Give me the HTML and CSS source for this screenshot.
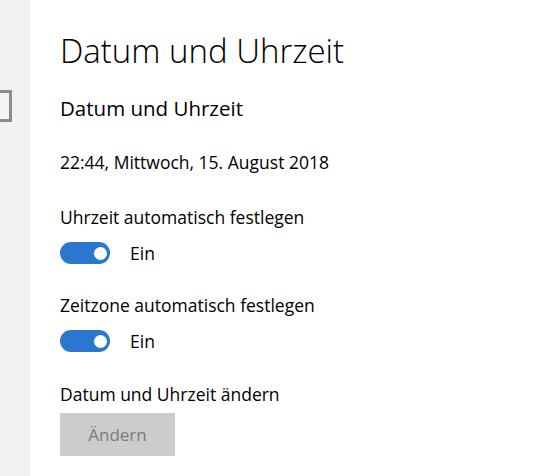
FILE: index.html
```html
<!DOCTYPE html>
<html lang="de">
  <head>
    <meta charset="UTF-8" />
    <meta name="viewport" content="width=device-width, initial-scale=1.0" />
    <title>Datum und Uhrzeit</title>
    <link rel="stylesheet" href="styles.css">
  </head>
  <body>
    <div class="window">
      <aside class="nav">
        <div class="search_box"></div>
      </aside>

      <main class="settings">
        <h1 class="page_title">Datum und Uhrzeit</h1>
        <h2 class="section_title">Datum und Uhrzeit</h2>

        <p class="now">22:44, Mittwoch, 15. August 2018</p>

        <div class="setting first">
          <p class="setting_label">Uhrzeit automatisch festlegen</p>
          <label class="toggle_row">
            <span class="toggle on"><span class="knob"></span></span>
            <span class="toggle_text">Ein</span>
          </label>
        </div>

        <div class="setting">
          <p class="setting_label">Zeitzone automatisch festlegen</p>
          <label class="toggle_row">
            <span class="toggle on"><span class="knob"></span></span>
            <span class="toggle_text">Ein</span>
          </label>
        </div>

        <div class="setting">
          <p class="setting_label">Datum und Uhrzeit ändern</p>
          <button class="btn" disabled>Ändern</button>
        </div>
      </main>
    </div>
  </body>
</html>
```

FILE: styles.css
```css
* {
  box-sizing: border-box;
}
html,
body {
  margin: 0;
  height: 100%;
}
body {
  font-family: "Open Sans", "Noto Sans", sans-serif;
  color: #000;
  background: #fff;
}
.window {
  display: flex;
  height: 100%;
}
aside.nav {
  flex: 0 0 30px;
  background-color: #f2f2f2;
  padding-top: 90px;
}
.search_box {
  width: 12px;
  height: 32px;
  border: 3px solid #8c8c8c;
  border-left: 0;
  background-color: #f4f4f4;
}
main.settings {
  flex-grow: 1;
  padding: 28px 0 0 30px;
}
h1,
h2,
p {
  margin: 0;
}
h1.page_title {
  font-size: 33px;
  font-weight: 300;
  line-height: 46px;
}
h2.section_title {
  font-size: 20.5px;
  font-weight: 400;
  line-height: 30px;
  margin-top: 19px;
}
p.now,
p.setting_label,
.toggle_text {
  font-size: 17.5px;
  line-height: 24px;
}
p.now {
  margin-top: 27px;
}
.setting {
  margin-top: 28px;
}
.setting.first {
  margin-top: 31px;
}
.setting:last-child {
  margin-top: 29px;
}
.toggle_row {
  display: flex;
  align-items: center;
  margin-top: 12px;
  cursor: pointer;
}
.toggle {
  width: 50px;
  height: 22px;
  border-radius: 11px;
  background-color: #2b77d0;
  display: flex;
  align-items: center;
  justify-content: flex-end;
  padding-right: 3px;
}
.knob {
  width: 13px;
  height: 13px;
  border-radius: 50%;
  background-color: #fff;
}
.toggle_text {
  margin-left: 20px;
}
.btn {
  display: block;
  margin-top: 7px;
  width: 115px;
  height: 43px;
  border: 0;
  background-color: #cccccc;
  color: #7a7a7a;
  font-family: inherit;
  font-size: 17px;
}
```
